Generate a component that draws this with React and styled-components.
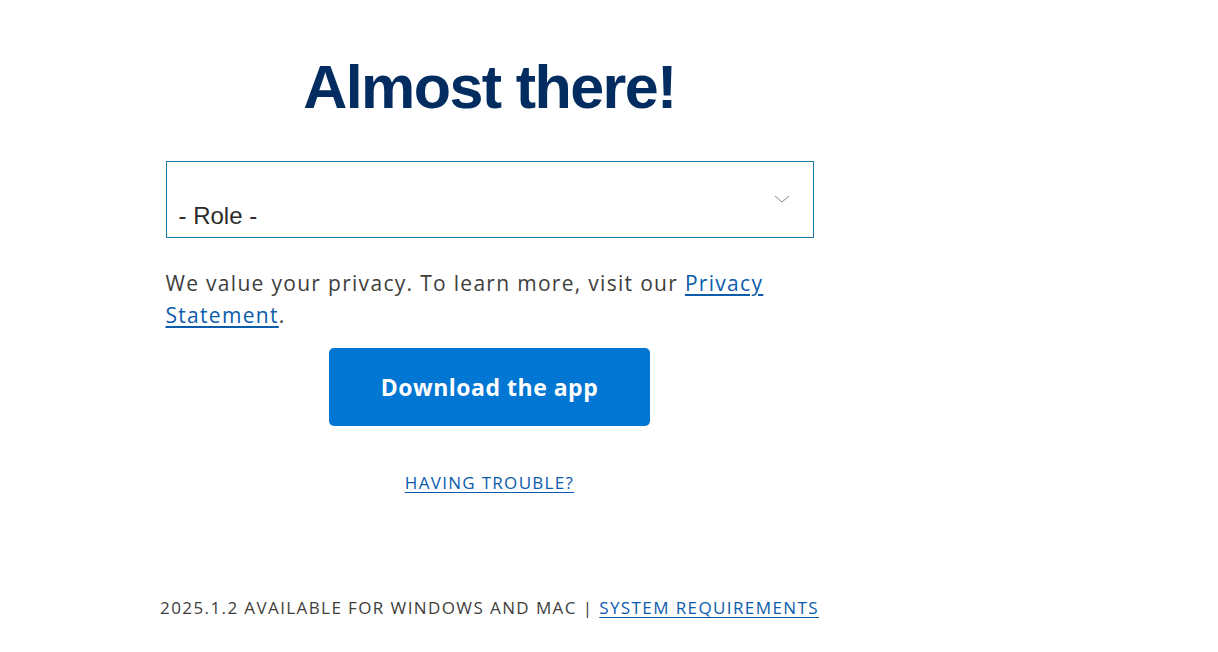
import React from "react";
import styled, { createGlobalStyle } from "styled-components";

const GlobalStyle = createGlobalStyle`
  body {
    margin: 0;
    background: #fff;
    font-family: "Open Sans", "Noto Sans", sans-serif;
  }
`;

const Page = styled.div`
  width: 979px;
  padding-top: 52px;
  display: flex;
  flex-direction: column;
  align-items: center;
`;

const Card = styled.div`
  width: 648px;
  display: flex;
  flex-direction: column;
  align-items: center;
`;

const Title = styled.h1`
  margin: 0;
  font-family: "Liberation Sans", Arial, sans-serif;
  font-weight: 700;
  font-size: 61px;
  letter-spacing: -1.6px;
  line-height: 70px;
  color: #032d60;
`;

const SelectBox = styled.div`
  box-sizing: border-box;
  margin-top: 39px;
  align-self: stretch;
  height: 77px;
  border: 1px solid #1b7aa6;
  display: flex;
  align-items: flex-end;
  padding: 0 22px 7px 12px;
  position: relative;
  font-family: "Liberation Sans", Arial, sans-serif;
  font-size: 24px;
  line-height: 28px;
  color: #2b2b2b;
`;

const Chevron = styled.svg`
  position: absolute;
  right: 23px;
  top: 33px;
`;

const Note = styled.p`
  align-self: stretch;
  margin: 29px 0 0;
  font-size: 21px;
  line-height: 32px;
  letter-spacing: 1.3px;
  color: #3e3e3c;
`;

const Link = styled.a`
  color: #0b5cab;
  text-decoration: underline;
  text-underline-offset: 3px;
`;

const Button = styled.button`
  margin-top: 17px;
  width: 321px;
  height: 78px;
  border: none;
  border-radius: 5px;
  background: #0176d3;
  color: #fff;
  font-family: "Open Sans", sans-serif;
  font-weight: 700;
  font-size: 23px;
  letter-spacing: 0.5px;
`;

const Trouble = styled(Link)`
  margin-top: 45px;
  font-size: 17px;
  letter-spacing: 1.3px;
`;

const Footer = styled.div`
  margin-top: 102px;
  font-size: 17px;
  letter-spacing: 1.4px;
  color: #3e3e3c;
  text-transform: uppercase;
`;

export default function App() {
  return (
    <>
      <GlobalStyle />
      <Page>
        <Card>
          <Title>Almost there!</Title>
          <SelectBox>
            <span>- Role -</span>
            <Chevron width="16" height="9" viewBox="0 0 16 9">
              <path d="M1 1l7 6 7-6" fill="none" stroke="#8a8a8a" strokeWidth="1" />
            </Chevron>
          </SelectBox>
          <Note>
            We value your privacy. To learn more, visit our <Link href="#">Privacy Statement</Link>.
          </Note>
          <Button>Download the app</Button>
          <Trouble href="#">HAVING TROUBLE?</Trouble>
        </Card>
        <Footer>
          2025.1.2 available for Windows and Mac | <Link href="#">System Requirements</Link>
        </Footer>
      </Page>
    </>
  );
}
